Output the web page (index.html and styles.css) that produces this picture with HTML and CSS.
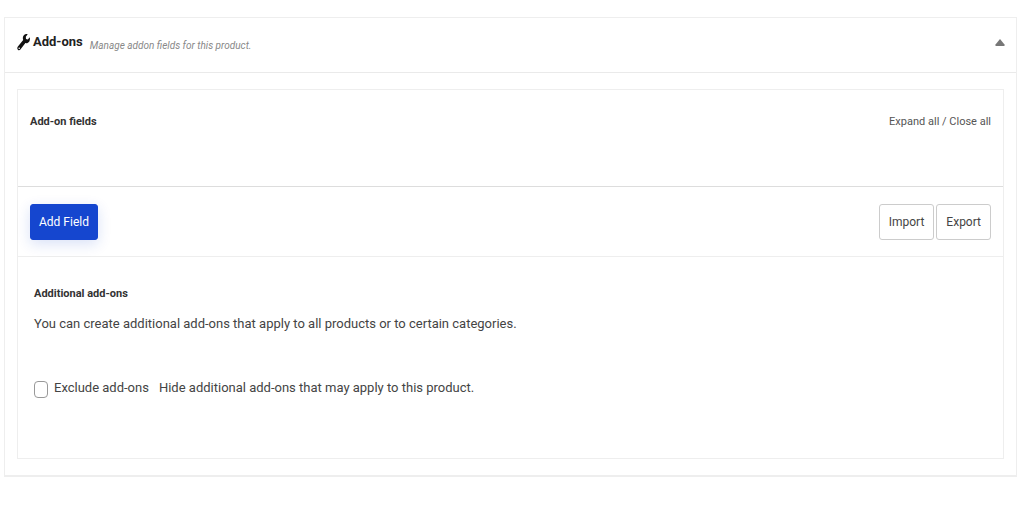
FILE: index.html
```html
<!DOCTYPE html>
<html lang="en">
<head>
    <meta charset="UTF-8">
    <meta name="viewport" content="width=device-width, initial-scale=1.0">
    <title>Product Add-ons</title>

    <link rel="stylesheet" href="styles.css">
</head>
<body>

    <main class="panel">

        <!-- Panel heading -->
        <header class="panel-header">
            <svg class="wrench" viewBox="0 0 14 18" aria-hidden="true">
                <path d="M12.800 4.200 10.800 6.500 9 6 8.800 3.700 10.700 1.200C8.600.3 6.300 1.600 5.900 4.200c-.2 1.200 0 2 .3 2.900L.9 13.600c-.8 1-.8 2.300 0 3.100.7.800 1.800.7 2.500-.2l5-6.400c2.700.7 5.200-1.700 4.400-5.900zM2.200 16a.8.800 0 1 1 0-1.600.8.800 0 0 1 0 1.600z"/>
            </svg>
            <h2>Add-ons</h2>
            <span class="hint">Manage addon fields for this product.</span>
            <button type="button" class="toggle" aria-label="Toggle panel">
                <svg viewBox="0 0 10 7" aria-hidden="true"><path d="M5 0 9.500 5.500V7H.5V5.500z"/></svg>
            </button>
        </header>

        <div class="panel-body">
            <div class="box">

                <!-- Field list -->
                <section class="fields">
                    <h3>Add-on fields</h3>
                    <div class="links"><a href="#">Expand all</a> / <a href="#">Close all</a></div>
                </section>

                <!-- Buttons -->
                <div class="toolbar">
                    <button type="button" class="btn btn-primary">Add Field</button>
                    <div class="btn-group">
                        <button type="button" class="btn">Import</button>
                        <button type="button" class="btn">Export</button>
                    </div>
                </div>

                <!-- Additional add-ons -->
                <section class="additional">
                    <h3>Additional add-ons</h3>
                    <p>You can create additional add-ons that apply to all products or to certain categories.</p>
                    <div class="option">
                        <input type="checkbox" id="exclude-addons">
                        <label for="exclude-addons">Exclude add-ons</label>
                        <span>Hide additional add-ons that may apply to this product.</span>
                    </div>
                </section>

            </div>
        </div>

    </main>

</body>
</html>
```
FILE: styles.css
```css
/* General styles */
* {
    box-sizing: border-box;
}

body {
    font-family: Roboto, sans-serif;
    font-size: 13px;
    line-height: 20px;
    color: #444;
    margin: 0;
    padding: 17px 7px 36px 4px;
    background-color: #fff;
}

h2, h3, p {
    margin: 0;
}

/* Outer panel */
.panel {
    border: 1px solid #eee;
    border-bottom-width: 2px;
}

.panel-header {
    display: flex;
    align-items: center;
    height: 55px;
    padding: 0 11px 6px 12px;
    border-bottom: 1px solid #eaeaea;
}

.wrench {
    width: 14px;
    height: 18px;
    margin-right: 2px;
    fill: #111;
}

.panel-header h2 {
    font-size: 13px;
    font-weight: 700;
    color: #222;
}

.hint {
    margin: 8px 0 0 7px;
    font-size: 10px;
    font-style: italic;
    color: #888;
}

.toggle {
    display: flex;
    margin-left: auto;
    padding: 0;
    border: none;
    background: none;
    cursor: pointer;
}

.toggle svg {
    width: 10px;
    height: 7px;
    fill: #777;
}

/* Inner box */
.panel-body {
    padding: 16px 12px;
}

.box {
    border: 1px solid #eee;
}

.box h3 {
    font-size: 11px;
    font-weight: 700;
    color: #333;
}

.fields {
    display: flex;
    justify-content: space-between;
    min-height: 97px;
    padding: 22px 12px;
    border-bottom: 1px solid #ddd;
}

.links {
    font-size: 11px;
    color: #555;
}

.links a {
    color: inherit;
    text-decoration: none;
}

/* Buttons */
.toolbar {
    display: flex;
    align-items: center;
    justify-content: space-between;
    padding: 17px 12px 16px;
    border-bottom: 1px solid #eee;
}

.btn-group {
    display: flex;
    gap: 2px;
}

.btn {
    height: 36px;
    padding: 0 9px;
    border: 1px solid #ccc;
    border-radius: 3px;
    background-color: #fff;
    color: #444;
    font-family: inherit;
    font-size: 12px;
    cursor: pointer;
}

.btn-primary {
    padding: 0 8px;
    border-color: #1546cf;
    background-color: #1546cf;
    color: #fff;
    box-shadow: 0 4px 14px rgba(21, 70, 207, 0.16);
}

/* Additional add-ons */
.additional {
    padding: 27px 16px 60px;
}

.additional p {
    margin-top: 10px;
}

.option {
    display: flex;
    align-items: center;
    margin-top: 44px;
}

.option input {
    appearance: none;
    width: 14px;
    height: 17px;
    margin: 2px 6px 0 0;
    border: 1px solid #999;
    border-radius: 4px;
    background-color: #fff;
}

.option input:checked {
    background-color: #1546cf;
}

.option span {
    margin-left: 10px;
}
```
